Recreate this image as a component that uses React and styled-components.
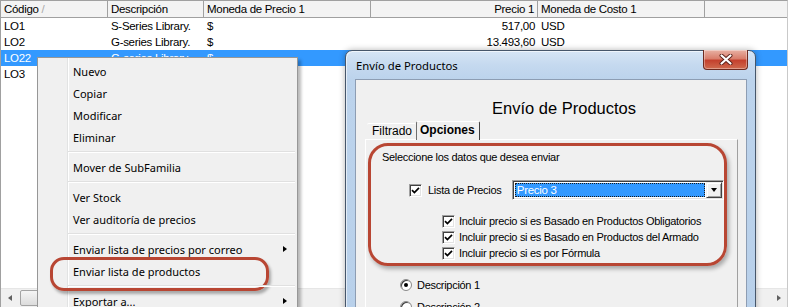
import React from "react";
import styled, { createGlobalStyle } from "styled-components";

const sans = `"Liberation Sans", Arial, sans-serif`;
const ui = `"Noto Sans", "Segoe UI", sans-serif`;
const red = "#b84633";
const cols = "107px 96px 167px 167px 167px 1fr";

const GlobalStyle = createGlobalStyle`
  html, body { margin: 0; padding: 0; }
  body { width: 789px; height: 307px; overflow: hidden; background: #fff; }
  * { box-sizing: border-box; }
`;

const Screen = styled.div`
  position: relative;
  width: 789px;
  height: 307px;
  overflow: hidden;
  font-family: ${sans};
  color: #000;
`;

/* ---------- grid behind ---------- */

const GridFrame = styled.div`
  width: 788px;
  height: 307px;
  display: flex;
  flex-direction: column;
  border-top: 1px solid #a0a0a0;
  border-left: 1px solid #a0a0a0;
  border-right: 1px solid #c9c9c9;
  background: #fff;
`;

const HeaderRow = styled.div`
  display: grid;
  grid-template-columns: ${cols};
  height: 17px;
  background: #f3f3f3;
  border-bottom: 1px solid #a0a0a0;
`;

const HeaderCell = styled.div`
  padding: 0 3px;
  border-right: ${(p) => (p.$last ? "none" : "1px solid #a0a0a0")};
  font-size: 11.5px;
  letter-spacing: -0.3px;
  line-height: 16px;
  text-align: ${(p) => (p.$right ? "right" : "left")};
  white-space: nowrap;
  overflow: hidden;

  span {
    color: #a8a8a8;
  }
`;

const Body = styled.div`
  flex: 1;
`;

const Row = styled.div`
  display: grid;
  grid-template-columns: ${cols};
  height: 16px;
  background: ${(p) => (p.$selected ? "#3399ff" : "#fff")};
  color: ${(p) => (p.$selected ? "#fff" : "#000")};
`;

const Cell = styled.div`
  padding: 0 3px;
  font-size: 11.5px;
  letter-spacing: -0.3px;
  line-height: 16px;
  text-align: ${(p) => (p.$right ? "right" : "left")};
  white-space: nowrap;
  overflow: hidden;
`;

const HScroll = styled.div`
  height: 19px;
  display: flex;
  align-items: center;
  background: #f0f0f0;
  border-top: 1px solid #e6e6e6;
`;

const ScrollArrow = styled.div`
  width: 17px;
  height: 17px;
  display: flex;
  align-items: center;
  justify-content: center;

  &::before {
    content: "";
    border-top: 3.5px solid transparent;
    border-bottom: 3.5px solid transparent;
    ${(p) =>
      p.$dir === "left"
        ? "border-right: 4px solid #606060;"
        : "border-left: 4px solid #606060;"}
  }
`;

const Thumb = styled.div`
  width: 180px;
  height: 16px;
  margin-left: 2px;
  border: 1px solid #a3a3a3;
  border-radius: 2px;
  background: linear-gradient(to bottom, #f5f5f5, #dcdcdc);
`;

const ScrollTrack = styled.div`
  flex: 1;
`;

/* ---------- context menu ---------- */

const Menu = styled.div`
  position: absolute;
  left: 37px;
  top: 57px;
  width: 261px;
  padding: 2px;
  border: 1px solid #979797;
  background-color: #f0f0f0;
  background-image: linear-gradient(
    to right,
    transparent 29px,
    #e2e3e3 29px,
    #e2e3e3 30px,
    #ffffff 30px,
    #ffffff 31px,
    transparent 31px
  );
  box-shadow: 3px 3px 3px rgba(0, 0, 0, 0.28);
  font-family: ${ui};
  font-size: 11px;
`;

const MenuItem = styled.div`
  position: relative;
  height: 22px;
  display: flex;
  align-items: center;
  justify-content: space-between;
  padding: 0 8px 0 33px;
  white-space: nowrap;

  ${(p) =>
    p.$circled &&
    `
    &::after {
      content: "";
      position: absolute;
      left: 10px;
      top: -3px;
      width: 213px;
      height: 28px;
      border: 3px solid ${red};
      border-radius: 14px;
      box-shadow: 2px 3px 3px rgba(0, 0, 0, 0.3);
    }
  `}
`;

const SubArrow = styled.span`
  width: 0;
  height: 0;
  border-top: 3.5px solid transparent;
  border-bottom: 3.5px solid transparent;
  border-left: 4px solid #000;
`;

const MenuSeparator = styled.div`
  height: 8px;
  margin-left: 28px;
  position: relative;

  &::before {
    content: "";
    position: absolute;
    left: 0;
    right: 0;
    top: 3px;
    height: 1px;
    background: #e0e0e0;
    border-bottom: 1px solid #fff;
  }
`;

/* ---------- dialog ---------- */

const Dialog = styled.div`
  position: absolute;
  left: 345px;
  top: 50px;
  width: 411px;
  height: 280px;
  display: flex;
  flex-direction: column;
  padding: 0 8px 0 9px;
  border: 1px solid #46566a;
  border-radius: 7px 7px 0 0;
  background: linear-gradient(
    to bottom,
    #d6e5f5 0px,
    #c5d9ef 14px,
    #bcd3ec 28px,
    #b8d0ea 100%
  );
  box-shadow: 0 0 6px rgba(0, 0, 0, 0.3), inset 1px 1px 0 rgba(255, 255, 255, 0.6);
`;

const TitleBar = styled.div`
  height: 28px;
  display: flex;
  justify-content: space-between;
  align-items: flex-start;
`;

const TitleText = styled.div`
  margin-top: 7px;
  padding-left: 1px;
  font-family: ${ui};
  font-size: 11.3px;
  line-height: 16px;
`;

const CloseButton = styled.div`
  width: 45px;
  height: 20px;
  margin-top: -1px;
  margin-right: -1px;
  display: flex;
  align-items: center;
  justify-content: center;
  border: 1px solid #6e2a20;
  border-top: none;
  border-radius: 0 0 4px 4px;
  background: linear-gradient(
    to bottom,
    #e8b1a4 0%,
    #d97e6c 45%,
    #c4412e 55%,
    #cf6a4e 100%
  );
  box-shadow: inset 0 0 0 1px rgba(255, 255, 255, 0.35);
`;

const Client = styled.div`
  flex: 1;
  display: flex;
  flex-direction: column;
  padding: 0 8px 0 9px;
  border: 1px solid #8d9db3;
  border-bottom: none;
  background: #f0f0f0;
`;

const BigTitle = styled.div`
  margin-top: 18px;
  padding-left: 25px;
  height: 20px;
  font-size: 16.5px;
  line-height: 20px;
  text-align: center;
`;

const TabRow = styled.div`
  margin-top: 2px;
  height: 19px;
  padding-left: 2px;
  display: flex;
  align-items: flex-end;
`;

const Tab = styled.div`
  height: ${(p) => (p.$active ? "19px" : "16px")};
  padding: ${(p) => (p.$active ? "1px 4px 0 3px" : "0 4px 0 5px")};
  font-size: 12px;
  font-weight: ${(p) => (p.$active ? 700 : 400)};
  line-height: 15px;
  border-top: 1px solid #fff;
  border-left: ${(p) => (p.$active ? "1px solid #6f6f6f" : "none")};
  border-right: ${(p) => (p.$active ? "1px solid #404040" : "none")};
  border-radius: 2px 2px 0 0;
  background: #f0f0f0;
  margin-bottom: ${(p) => (p.$active ? "-1px" : "0")};
  position: relative;
`;

const Panel = styled.div`
  flex: 1;
  border-top: 1px solid #fff;
  border-left: 1px solid #fff;
  border-right: 1px solid #a0a0a0;
  background: #f0f0f0;
  font-size: 11px;
  letter-spacing: -0.3px;
  line-height: 16px;
`;

const Highlight = styled.div`
  margin: 3px 10px 0 2px;
  padding: 3px 0 2px 11px;
  border: 3px solid ${red};
  border-radius: 20px;
  box-shadow: 2px 3px 4px rgba(0, 0, 0, 0.3);
`;

const OptionLine = styled.div`
  display: flex;
  align-items: center;
  height: ${(p) => (p.$tall ? "20px" : "16px")};
  margin-top: ${(p) => p.$gap || 0}px;
  padding-left: ${(p) => p.$indent || 0}px;
  white-space: nowrap;
`;

const SubOptions = styled.div`
  margin-top: 13px;
`;

const Label = styled.span`
  margin-left: ${(p) => p.$gap || 4}px;
  width: ${(p) => (p.$width ? `${p.$width}px` : "auto")};
`;

const Box = styled.span`
  flex: none;
  width: 13px;
  height: 13px;
  display: flex;
  align-items: center;
  justify-content: center;
  background: #fff;
  border: 1px solid;
  border-color: #a0a0a0 #fff #fff #a0a0a0;
  box-shadow: inset 1px 1px 0 #404040, inset -1px -1px 0 #e3e3e3;
`;

const Radio = styled.span`
  flex: none;
  position: relative;
  width: 12px;
  height: 12px;
  border-radius: 50%;
  background: #fff;
  border: 1px solid #8a8a8a;
  box-shadow: inset 1px 1px 0 #404040;

  &::after {
    content: "";
    display: ${(p) => (p.$on ? "block" : "none")};
    position: absolute;
    left: 3px;
    top: 3px;
    width: 4px;
    height: 4px;
    border-radius: 50%;
    background: #000;
  }
`;

const Combo = styled.div`
  width: 215px;
  height: 20px;
  display: flex;
  padding: 1px;
  background: #fff;
  border: 1px solid;
  border-color: #a0a0a0 #fff #fff #a0a0a0;
  box-shadow: inset 1px 1px 0 #404040, inset -1px -1px 0 #e3e3e3;
`;

const ComboValue = styled.div`
  flex: 1;
  margin: 1px;
  padding-left: 2px;
  background: #3399ff;
  color: #fff;
  font-size: 11.5px;
  outline: 1px dotted #1a1a1a;
  outline-offset: -1px;
  line-height: 14px;
`;

const ComboButton = styled.div`
  width: 16px;
  display: flex;
  align-items: center;
  justify-content: center;
  background: #f0f0f0;
  border: 1px solid;
  border-color: #f0f0f0 #404040 #404040 #f0f0f0;
  box-shadow: inset 1px 1px 0 #fff, inset -1px -1px 0 #a0a0a0;

  &::before {
    content: "";
    border-left: 3.5px solid transparent;
    border-right: 3.5px solid transparent;
    border-top: 4px solid #000;
  }
`;

const RadioGroup = styled.div`
  margin-top: 11px;
  padding-left: 34px;
  display: flex;
  flex-direction: column;
  gap: 6px;
`;

const Check = () => (
  <Box>
    <svg width="9" height="9" viewBox="0 0 9 9">
      <path d="M1 4.2 L3.4 6.6 L8 1.8" fill="none" stroke="#000" strokeWidth="1.7" />
    </svg>
  </Box>
);

const CloseGlyph = () => (
  <svg width="14" height="11" viewBox="0 0 14 11">
    <path d="M2.5 1.5 L11.5 9.5 M11.5 1.5 L2.5 9.5" stroke="#5a2018" strokeWidth="4" strokeLinecap="round" />
    <path d="M2.5 1.5 L11.5 9.5 M11.5 1.5 L2.5 9.5" stroke="#fff" strokeWidth="2.2" strokeLinecap="round" />
  </svg>
);

const rows = [
  ["LO1", "S-Series Library.", "$", "517,00", "USD"],
  ["LO2", "G-series Library.", "$", "13.493,60", "USD"],
  ["LO22", "G-series Library.", "$", "", ""],
  ["LO3", "", "", "", ""],
];

const menu = [
  { label: "Nuevo" },
  { label: "Copiar" },
  { label: "Modificar" },
  { label: "Eliminar" },
  { sep: true },
  { label: "Mover de SubFamilia" },
  { sep: true },
  { label: "Ver Stock" },
  { label: "Ver auditoría de precios" },
  { sep: true },
  { label: "Enviar lista de precios por correo", sub: true },
  { label: "Enviar lista de productos", circled: true },
  { sep: true },
  { label: "Exportar a...", sub: true },
];

const includes = [
  "Incluir precio si es Basado en Productos Obligatorios",
  "Incluir precio si es Basado en Productos del Armado",
  "Incluir precio si es por Fórmula",
];

export default function App() {
  return (
    <Screen>
      <GlobalStyle />
      <GridFrame>
        <HeaderRow>
          <HeaderCell>
            Código <span>/</span>
          </HeaderCell>
          <HeaderCell>Descripción</HeaderCell>
          <HeaderCell>Moneda de Precio 1</HeaderCell>
          <HeaderCell $right>Precio 1</HeaderCell>
          <HeaderCell>Moneda de Costo 1</HeaderCell>
          <HeaderCell $last />
        </HeaderRow>
        <Body>
          {rows.map((r, i) => (
            <Row key={r[0]} $selected={i === 2}>
              <Cell>{r[0]}</Cell>
              <Cell>{r[1]}</Cell>
              <Cell>{r[2]}</Cell>
              <Cell $right>{r[3]}</Cell>
              <Cell>{r[4]}</Cell>
              <Cell />
            </Row>
          ))}
        </Body>
        <HScroll>
          <ScrollArrow $dir="left" />
          <Thumb />
          <ScrollTrack />
          <ScrollArrow $dir="right" />
        </HScroll>
      </GridFrame>

      <Menu>
        {menu.map((m, i) =>
          m.sep ? (
            <MenuSeparator key={i} />
          ) : (
            <MenuItem key={i} $circled={m.circled}>
              <span>{m.label}</span>
              {m.sub && <SubArrow />}
            </MenuItem>
          )
        )}
      </Menu>

      <Dialog>
        <TitleBar>
          <TitleText>Envío de Productos</TitleText>
          <CloseButton>
            <CloseGlyph />
          </CloseButton>
        </TitleBar>
        <Client>
          <BigTitle>Envío de Productos</BigTitle>
          <TabRow>
            <Tab>Filtrado</Tab>
            <Tab $active>Opciones</Tab>
          </TabRow>
          <Panel>
            <Highlight>
              <OptionLine>Seleccione los datos que desea enviar</OptionLine>
              <OptionLine $tall $gap={15} $indent={27}>
                <Check />
                <Label $gap={6} $width={85}>
                  Lista de Precios
                </Label>
                <Combo>
                  <ComboValue>Precio 3</ComboValue>
                  <ComboButton />
                </Combo>
              </OptionLine>
              <SubOptions>
                {includes.map((t) => (
                  <OptionLine key={t} $indent={60}>
                    <Check />
                    <Label>{t}</Label>
                  </OptionLine>
                ))}
              </SubOptions>
            </Highlight>
            <RadioGroup>
              <OptionLine>
                <Radio $on />
                <Label $gap={5}>Descripción 1</Label>
              </OptionLine>
              <OptionLine>
                <Radio />
                <Label $gap={5}>Descripción 2</Label>
              </OptionLine>
            </RadioGroup>
          </Panel>
        </Client>
      </Dialog>
    </Screen>
  );
}
